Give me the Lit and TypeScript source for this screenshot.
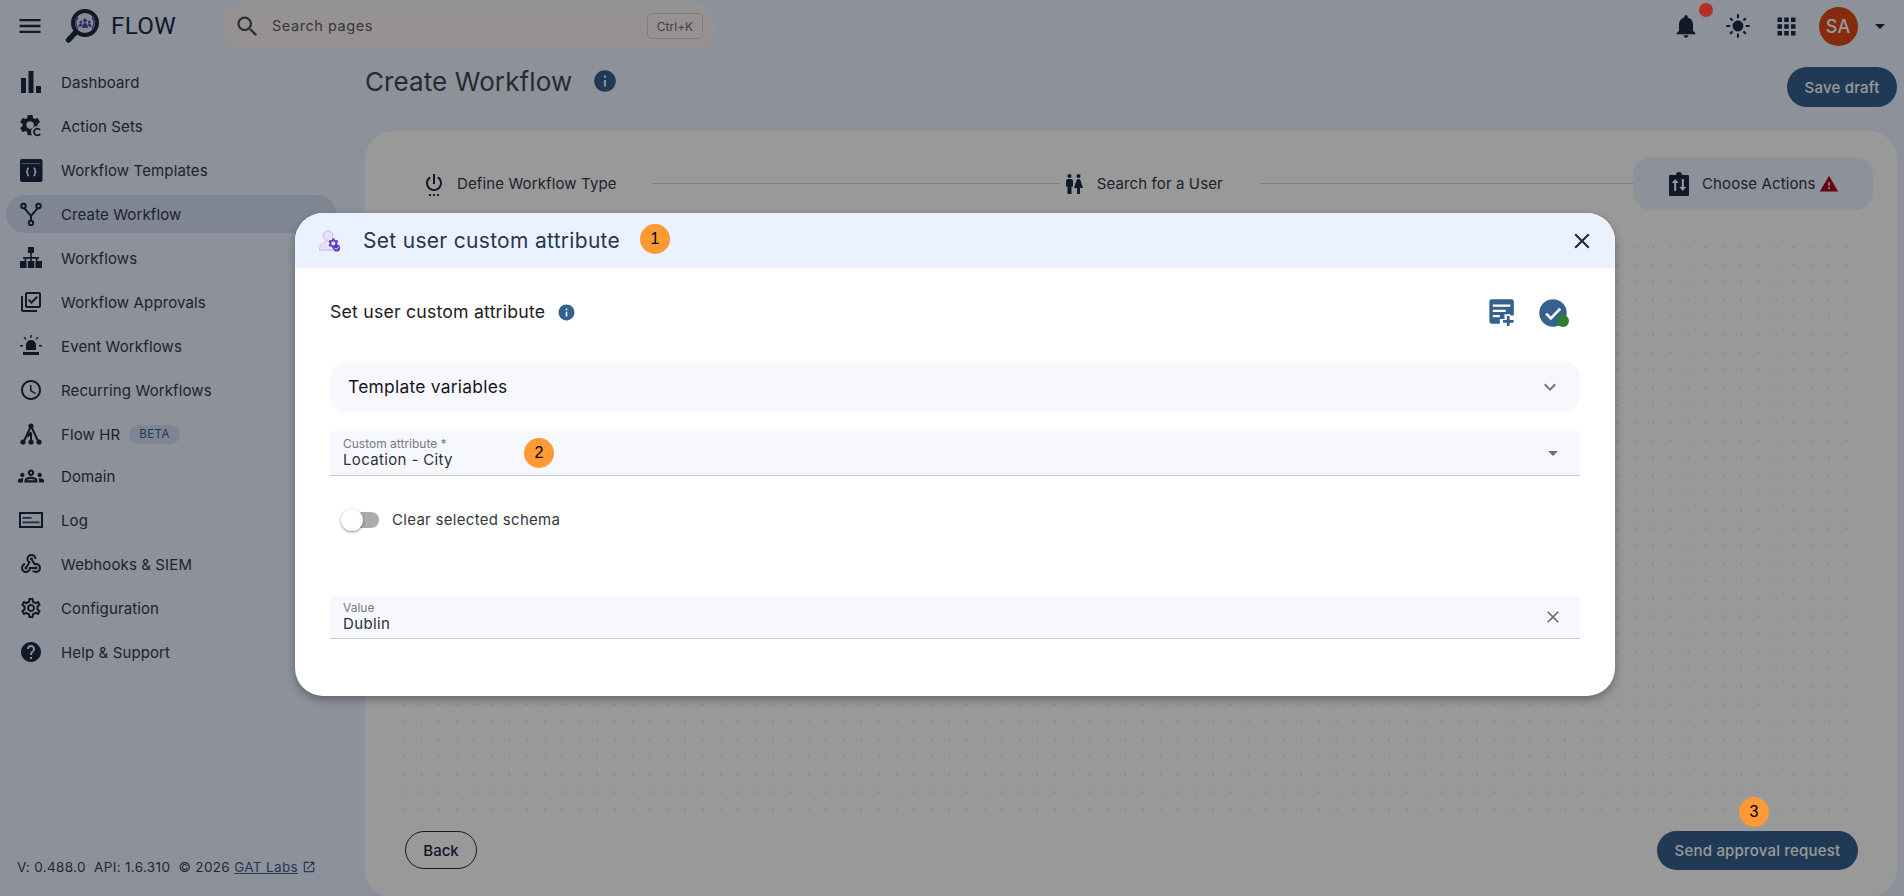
import { LitElement, html, css, svg } from "lit";
import { customElement } from "lit/decorators.js";

const P = {
  menu: "M3 18h18v-2H3v2zm0-5h18v-2H3v2zm0-7v2h18V6H3z",
  search: "M15.5 14h-.79l-.28-.27C15.41 12.59 16 11.11 16 9.5 16 5.91 13.09 3 9.5 3S3 5.91 3 9.5 5.91 16 9.5 16c1.61 0 3.09-.59 4.23-1.57l.27.28v.79l5 4.99L20.49 19l-4.99-5zm-6 0C7.01 14 5 11.99 5 9.5S7.01 5 9.5 5 14 7.01 14 9.5 11.99 14 9.5 14z",
  bell: "M12 22c1.1 0 2-.9 2-2h-4c0 1.1.89 2 2 2zm6-6v-5c0-3.07-1.64-5.64-4.5-6.32V4c0-.83-.67-1.5-1.5-1.5s-1.5.67-1.5 1.5v.68C7.63 5.36 6 7.92 6 11v5l-2 2v1h16v-1l-2-2z",
  sun: "M12 7c-2.76 0-5 2.24-5 5s2.24 5 5 5 5-2.24 5-5-2.24-5-5-5zM2 13h2c.55 0 1-.45 1-1s-.45-1-1-1H2c-.55 0-1 .45-1 1s.45 1 1 1zm18 0h2c.55 0 1-.45 1-1s-.45-1-1-1h-2c-.55 0-1 .45-1 1s.45 1 1 1zM11 2v2c0 .55.45 1 1 1s1-.45 1-1V2c0-.55-.45-1-1-1s-1 .45-1 1zm0 18v2c0 .55.45 1 1 1s1-.45 1-1v-2c0-.55-.45-1-1-1s-1 .45-1 1zM5.99 4.58c-.39-.39-1.03-.39-1.41 0-.39.39-.39 1.03 0 1.41l1.06 1.06c.39.39 1.03.39 1.41 0s.39-1.03 0-1.41L5.99 4.58zm12.37 12.37c-.39-.39-1.03-.39-1.41 0-.39.39-.39 1.03 0 1.41l1.06 1.06c.39.39 1.03.39 1.41 0 .39-.39.39-1.03 0-1.41l-1.06-1.06zm1.06-10.96c.39-.39.39-1.03 0-1.41-.39-.39-1.03-.39-1.41 0l-1.06 1.06c-.39.39-.39 1.03 0 1.41s1.03.39 1.41 0l1.06-1.06zM7.05 18.36c.39-.39.39-1.03 0-1.41-.39-.39-1.03-.39-1.41 0l-1.06 1.06c-.39.39-.39 1.03 0 1.41s1.03.39 1.41 0l1.06-1.06z",
  apps: "M4 8h4V4H4v4zm6 12h4v-4h-4v4zm-6 0h4v-4H4v4zm0-6h4v-4H4v4zm6 0h4v-4h-4v4zm6-10v4h4V4h-4zm-6 4h4V4h-4v4zm6 6h4v-4h-4v4zm0 6h4v-4h-4v4z",
  drop: "M7 10l5 5 5-5z",
  info: "M12 2C6.48 2 2 6.48 2 12s4.48 10 10 10 10-4.48 10-10S17.52 2 12 2zm1 15h-2v-6h2v6zm0-8h-2V7h2v2z",
  close: "M19 6.41L17.59 5 12 10.59 6.41 5 5 6.41 10.59 12 5 17.59 6.41 19 12 13.41 17.59 19 19 17.59 13.41 12z",
  expand: "M16.59 8.59L12 13.17 7.41 8.59 6 10l6 6 6-6z",
  warn: "M1 21h22L12 2 1 21zm12-3h-2v-2h2v2zm0-4h-2v-4h2v4z",
  open: "M19 19H5V5h7V3H5c-1.11 0-2 .9-2 2v14c0 1.1.89 2 2 2h14c1.1 0 2-.9 2-2v-7h-2v7zM14 3v2h3.59l-9.83 9.83 1.41 1.41L19 6.41V10h2V3h-7z",
  power: "M7 24h2v-2H7v2zm4 0h2v-2h-2v2zm2-22h-2v10h2V2zm3.56 2.44l-1.45 1.45C16.84 6.94 18 8.83 18 11c0 3.31-2.69 6-6 6s-6-2.69-6-6c0-2.17 1.16-4.06 2.88-5.12L7.44 4.44C5.36 5.88 4 8.28 4 11c0 4.42 3.58 8 8 8s8-3.58 8-8c0-2.72-1.36-5.12-3.44-6.56zM15 24h2v-2h-2v2z",
  wc: "M5.5 22v-7.5H4V9c0-1.1.9-2 2-2h3c1.1 0 2 .9 2 2v5.5H9.5V22h-4zM18 22v-6h3l-2.54-7.63C18.18 7.55 17.42 7 16.56 7h-.12c-.86 0-1.63.55-1.9 1.37L12 16h3v6h3zM7.5 6c1.11 0 2-.89 2-2s-.89-2-2-2-2 .89-2 2 .89 2 2 2zm9 0c1.11 0 2-.89 2-2s-.89-2-2-2-2 .89-2 2 .89 2 2 2z",
  approvals: "M20 4v12H8V4h12m0-2H8c-1.1 0-2 .9-2 2v12c0 1.1.9 2 2 2h12c1.1 0 2-.9 2-2V4c0-1.1-.9-2-2-2zm-7.53 12L9 10.5l1.4-1.41 2.07 2.08L17.6 6 19 7.41 12.47 14zM4 6H2v14c0 1.1.9 2 2 2h14v-2H4V6z",
  clock: "M11.99 2C6.47 2 2 6.48 2 12s4.47 10 9.99 10C17.52 22 22 17.52 22 12S17.52 2 11.99 2zM12 20c-4.42 0-8-3.58-8-8s3.58-8 8-8 8 3.58 8 8-3.58 8-8 8zm.5-13H11v6l5.25 3.15.75-1.23-4.5-2.67z",
  groups: "M4 13c1.1 0 2-.9 2-2 0-1.1-.9-2-2-2s-2 .9-2 2c0 1.1.9 2 2 2zm1.13 1.1C4.76 14.04 4.39 14 4 14c-.99 0-1.93.21-2.78.58C.48 14.9 0 15.62 0 16.43V18h4.5v-1.61c0-.83.23-1.61.63-2.29zM20 13c1.1 0 2-.9 2-2 0-1.1-.9-2-2-2s-2 .9-2 2c0 1.1.9 2 2 2zm4 3.43c0-.81-.48-1.53-1.22-1.85C21.93 14.21 20.99 14 20 14c-.39 0-.76.04-1.13.1.4.68.63 1.46.63 2.29V18H24v-1.57zm-7.76-2.78C15.07 13.14 13.62 12.75 12 12.75c-1.62 0-3.07.4-4.24.9C6.68 14.13 6 15.21 6 16.39V18h12v-1.61c0-1.18-.68-2.26-1.76-2.74zM8.07 16c.09-.23.13-.39.91-.69.97-.38 1.99-.56 3.02-.56s2.05.18 3.02.56c.77.3.81.46.91.69H8.07zM12 8c.55 0 1 .45 1 1s-.45 1-1 1-1-.45-1-1 .45-1 1-1m0-2c-1.66 0-3 1.34-3 3s1.34 3 3 3 3-1.34 3-3-1.34-3-3-3z",
  webhook: "M10 15h5.88c.27-.31.67-.5 1.12-.5.83 0 1.5.67 1.5 1.5s-.67 1.5-1.5 1.5c-.44 0-.84-.19-1.12-.5H11.9c-.46 2.28-2.48 4-4.9 4-2.76 0-5-2.24-5-5 0-2.42 1.72-4.44 4-4.9v2.07c-1.16.41-2 1.53-2 2.83 0 1.65 1.35 3 3 3s3-1.35 3-3v-1zm2.5-11c1.65 0 3 1.35 3 3h2c0-2.76-2.24-5-5-5s-5 2.24-5 5c0 1.43.6 2.71 1.55 3.62l-2.35 3.9c-.68.14-1.2.75-1.2 1.48 0 .83.67 1.5 1.5 1.5s1.5-.67 1.5-1.5c0-.16-.02-.31-.07-.45l3.38-5.63C10.49 9.61 9.5 8.42 9.5 7c0-1.65 1.35-3 3-3zm4.5 9c-.64 0-1.23.2-1.72.54l-3.05-5.07C11.53 8.35 11 7.74 11 7c0-.83.67-1.5 1.5-1.5S14 6.17 14 7c0 .15-.02.29-.06.43l2.19 3.65c.28-.05.57-.08.87-.08 2.76 0 5 2.24 5 5s-2.24 5-5 5c-1.85 0-3.47-1.01-4.33-2.5h2.67c.48.32 1.05.5 1.66.5 1.65 0 3-1.35 3-3s-1.35-3-3-3z",
  gearOut: "M19.43 12.98c.04-.32.07-.64.07-.98 0-.34-.03-.66-.07-.98l2.11-1.65c.19-.15.24-.42.12-.64l-2-3.46c-.09-.16-.26-.25-.44-.25-.06 0-.12.01-.17.03l-2.49 1c-.52-.4-1.08-.73-1.69-.98l-.38-2.65C14.46 2.18 14.25 2 14 2h-4c-.25 0-.46.18-.49.42l-.38 2.65c-.61.25-1.17.59-1.69.98l-2.49-1c-.06-.02-.12-.03-.18-.03-.17 0-.34.09-.43.25l-2 3.46c-.13.22-.07.49.12.64l2.11 1.65c-.04.32-.07.65-.07.98 0 .33.03.66.07.98l-2.11 1.65c-.19.15-.24.42-.12.64l2 3.46c.09.16.26.25.44.25.06 0 .12-.01.17-.03l2.49-1c.52.4 1.08.73 1.69.98l.38 2.65c.03.24.24.42.49.42h4c.25 0 .46-.18.49-.42l.38-2.65c.61-.25 1.17-.59 1.69-.98l2.49 1c.06.02.12.03.18.03.17 0 .34-.09.43-.25l2-3.46c.12-.22.07-.49-.12-.64l-2.11-1.65zm-1.98-1.71c.04.31.05.52.05.73 0 .21-.02.43-.05.73l-.14 1.13.89.7 1.08.84-.7 1.21-1.27-.51-1.04-.42-.9.68c-.43.32-.84.56-1.25.73l-1.06.43-.16 1.13-.2 1.35h-1.4l-.19-1.35-.16-1.13-1.06-.43c-.43-.18-.83-.41-1.23-.71l-.91-.7-1.06.43-1.27.51-.7-1.21 1.08-.84.89-.7-.14-1.13c-.03-.31-.05-.54-.05-.74s.02-.43.05-.73l.14-1.13-.89-.7-1.08-.84.7-1.21 1.27.51 1.04.42.9-.68c.43-.32.84-.56 1.25-.73l1.06-.43.16-1.13.2-1.35h1.39l.19 1.35.16 1.13 1.06.43c.43.18.83.41 1.23.71l.91.7 1.06-.43 1.27-.51.7 1.21-1.07.85-.89.7.14 1.13zM12 8c-2.21 0-4 1.79-4 4s1.79 4 4 4 4-1.79 4-4-1.79-4-4-4zm0 6c-1.1 0-2-.9-2-2s.9-2 2-2 2 .9 2 2-.9 2-2 2z",
  help: "M12 2C6.48 2 2 6.48 2 12s4.48 10 10 10 10-4.48 10-10S17.52 2 12 2zm1 17h-2v-2h2v2zm2.07-7.75l-.9.92C13.45 12.9 13 13.5 13 15h-2v-.5c0-1.1.45-2.1 1.17-2.83l1.24-1.26c.37-.36.59-.86.59-1.41 0-1.1-.9-2-2-2s-2 .9-2 2H8c0-2.21 1.79-4 4-4s4 1.79 4 4c0 .88-.36 1.68-.93 2.25z",
  gearFill: "M19.14 12.94c.04-.3.06-.61.06-.94 0-.32-.02-.64-.07-.94l2.03-1.58c.18-.14.23-.41.12-.61l-1.92-3.32c-.12-.22-.37-.29-.59-.22l-2.39.96c-.5-.38-1.03-.7-1.62-.94l-.36-2.54c-.04-.24-.24-.41-.48-.41h-3.84c-.24 0-.43.17-.47.41l-.36 2.54c-.59.24-1.13.57-1.62.94l-2.39-.96c-.22-.08-.47 0-.59.22L2.74 8.87c-.12.21-.08.47.12.61l2.03 1.58c-.05.3-.09.63-.09.94s.02.64.07.94l-2.03 1.58c-.18.14-.23.41-.12.61l1.92 3.32c.12.22.37.29.59.22l2.39-.96c.5.38 1.03.7 1.62.94l.36 2.54c.05.24.24.41.48.41h3.84c.24 0 .44-.17.47-.41l.36-2.54c.59-.24 1.13-.56 1.62-.94l2.39.96c.22.08.47 0 .59-.22l1.92-3.32c.12-.22.07-.47-.12-.61l-2.01-1.58zM12 15.6c-1.98 0-3.6-1.62-3.6-3.6s1.62-3.6 3.6-3.6 3.6 1.62 3.6 3.6-1.62 3.6-3.6 3.6z",
};

const mat = (d: string, cls = "") => html`<svg class="ic ${cls}" viewBox="0 0 24 24"><path d=${d}></path></svg>`;
const raw = (body: unknown, cls = "") => html`<svg class="ic ${cls}" viewBox="0 0 24 24">${body}</svg>`;

const navIcons: Record<string, unknown> = {
  bars: raw(svg`<path d="M2 8h5v15H2zM9.500 1h5v22h-5zM17 16h5v7h-5z"></path>`, "lg"),
  actions: raw(svg`<path d=${P.gearFill} transform="translate(-1.500 -1.500) scale(1.05)"></path><circle cx="18" cy="18" r="6" fill="#ebf2ff"></circle><path d="M21 15.800a3.400 3.400 0 1 0 .2 4.200" fill="none" stroke="currentColor" stroke-width="1.800"></path>`, "lg"),
  templates: raw(svg`<rect x="1" y="1" width="22.500" height="23" rx="2"></rect><path d="M3 5.200h18.500v.9H3z" fill="#ebf2ff" opacity=".55"></path><path d="M10 10c-1.500 0-1.500 1-1.500 2s-.5 1.800-1.500 1.800c1 0 1.500.8 1.500 1.800s0 2 1.500 2M14.500 10c1.500 0 1.500 1 1.500 2s.5 1.800 1.500 1.800c-1 0-1.500.8-1.500 1.800s0 2-1.500 2" fill="none" stroke="#ebf2ff" stroke-width="1.600"></path>`, "lg"),
  fork: raw(svg`<g fill="none" stroke="currentColor" stroke-width="2"><circle cx="4.500" cy="4" r="2.200"></circle><circle cx="19.500" cy="4" r="2.200"></circle><circle cx="12" cy="21" r="2.200"></circle><path d="M5.300 6.200 12 14l6.700-7.800M12 14v4.800"></path></g>`, "lg"),
  org: raw(svg`<path d="M9 1h6v6H9zM11.200 7h1.600v4h-1.600zM4 11h16v1.800h-1.600V15h-1.600v-2.200H7.200V15H5.600v-2.200H4zM11.200 11h1.600v4h-1.600zM1 15h6.500v7H1zM8.800 15h6.500v7H8.800zM16.500 15H23v7h-6.500z"></path>`, "lg"),
  approvals: mat(P.approvals, "lg"),
  siren: raw(svg`<path d="M7 16v-5a5 5 0 0 1 10 0v5zM4 18h16v3H4zM11.300 1h1.400v3h-1.400zM1 11h3v1.400H1zM20 11h3v1.400h-3zM4.500 3.700l1-1 2 2-1 1zM19.500 3.700l-1-1-2 2 1 1z"></path>`, "lg"),
  clock: mat(P.clock, "lg"),
  tree: raw(svg`<g fill="none" stroke="currentColor" stroke-width="2"><path d="M12 4 5 19M12 4l7 15M12 11v8M12 10l-3.500 5"></path></g><circle cx="12" cy="4" r="2.600"></circle><circle cx="4" cy="20" r="2.600"></circle><circle cx="12" cy="20" r="2.600"></circle><circle cx="20" cy="20" r="2.600"></circle>`, "lg"),
  groups: mat(P.groups, "xl"),
  log: raw(svg`<path fill-rule="evenodd" d="M0 4h24v16H0zM2 6v12h20V6z"></path><path d="M3.500 9h9v1.800h-9zM3.500 13.500h17v1.800h-17z" opacity=".85"></path>`, "lg"),
  webhook: mat(P.webhook, "lg"),
  gear: mat(P.gearOut, "lg"),
  help: mat(P.help, "lg"),
};

const nav = [
  ["bars", "Dashboard"], ["actions", "Action Sets"], ["templates", "Workflow Templates"], ["fork", "Create Workflow", "active"],
  ["org", "Workflows"], ["approvals", "Workflow Approvals"], ["siren", "Event Workflows"], ["clock", "Recurring Workflows"],
  ["tree", "Flow HR", "beta"], ["groups", "Domain"], ["log", "Log"], ["webhook", "Webhooks & SIEM"], ["gear", "Configuration"], ["help", "Help & Support"],
];

@customElement("app-root")
export class AppRoot extends LitElement {
  static styles = css`
    :host { display: block; position: relative; width: 100%; height: 100vh; overflow: hidden; background: #ebf2ff;
      font-family: Inter, "Liberation Sans", sans-serif; color: #323a4b; font-size: 14px; }
    * { box-sizing: border-box; }
    .ic { display: block; width: 24px; height: 24px; fill: currentColor; flex: none; color: #1a2b45; }
    .ic.xl { width: 26px; height: 26px; margin: 0 -1px; }
    .app { display: flex; flex-direction: column; height: 100%; }
    .top { display: flex; align-items: center; height: 52px; flex: none; }
    .burger { width: 28px; height: 28px; margin-left: 16px; }
    .logo { width: 36px; height: 36px; margin-left: 21px; flex: none; }
    .brand { font-size: 24.2px; margin-left: 10px; letter-spacing: .3px; color: #1a2b45; width: 66px; font-family: Roboto, sans-serif; }
    .search { display: flex; align-items: center; width: 494px; height: 46px; border-radius: 23px; background: #faf3f7; margin-left: 45px; padding: 0 13px 0 12px; }
    .search .ic { width: 27px; height: 27px; color: #4a4f57; }
    .search span.ph { margin: 0 0 1px 11px; font-size: 14.5px; color: #5c5f66; letter-spacing: .55px; flex: 1; }
    .kbd { width: 56px; height: 26px; border: 1px solid #d4cfd3; border-radius: 5px; display: flex; align-items: center; justify-content: center; font-size: 12px; color: #6b6e75; }
    .tools { margin-left: auto; display: flex; align-items: center; padding-right: 16px; }
    .bell { width: 28px; height: 28px; margin-right: 25px; }
    .sun { width: 26px; height: 26px; margin-right: 22.500px; }
    .grid { width: 27px; height: 27px; margin-right: 18.500px; }
    .avatar { width: 39px; height: 39px; border-radius: 50%; background: #de4a17; color: #fff; display: flex; align-items: center; justify-content: center; font-size: 18px; font-weight: 500; }
    .caret { width: 24px; height: 24px; margin-left: 10px; margin-right: -3.500px; }

    .body { flex: 1; display: flex; min-height: 0; }
    .side { width: 365px; flex: none; display: flex; flex-direction: column; padding: 11px 29px 21px 6px; }
    .row { display: flex; align-items: center; height: 38px; margin-bottom: 6px; border-radius: 19px; padding-left: 13px; gap: 18px; letter-spacing: .12px; color: #323a4b; flex: none; font-size: 15px; }
    .row.active { background: #d4def6; }
    .row.tight { margin-bottom: 4px; }
    .beta { font-size: 11.500px; height: 19px; padding: 0 10px; border-radius: 10px; background: #d4def6; color: #36618e; display: inline-flex; align-items: center; margin-left: -9px; letter-spacing: .4px; }
    .foot { margin-top: auto; padding-left: 11px; display: flex; align-items: center; font-size: 13.500px; letter-spacing: .34px; white-space: pre; color: #3c4352; }
    .foot a { color: #36618e; text-decoration: underline; }
    .foot .ic { width: 14px; height: 14px; margin-left: 4px; color: #36618e; }

    .main { flex: 1; min-width: 0; display: flex; flex-direction: column; padding-right: 7px; }
    .head { height: 79px; flex: none; display: flex; }
    .title { font-size: 26px; color: #43474e; margin-top: 14px; letter-spacing: .1px; }
    .head .ic { width: 26px; height: 26px; margin: 16px 0 0 20px; color: #36618e; }
    .save { margin-left: auto; margin-top: 15px; height: 40px; width: 110px; padding-bottom: 2px; }
    .btn { border: 0; border-radius: 20px; background: #36618e; color: #fff; font: 500 15px Inter, sans-serif; letter-spacing: .2px; display: flex; align-items: center; justify-content: center; padding-bottom: 1px; }
    .card { flex: 1; background: #fff; border-radius: 28px; margin-bottom: -1px; display: flex; flex-direction: column; padding: 26px 0 27px; min-height: 0; }
    .stepper { display: flex; align-items: center; height: 53px; flex: none; padding: 0 24px; }
    .step { display: flex; align-items: center; height: 53px; padding: 0 36px 0 33px; gap: 11px; font-size: 15px; letter-spacing: .12px; color: #323a4b; white-space: nowrap; }
    .step.b { padding: 0 38px 0 2px; }
    .step.cur { background: #ebf2ff; border-radius: 18px; width: 240px; padding-left: 34px; }
    .step .warn { width: 20px; height: 20px; color: #b00020; margin-left: -8px; }
    .line { height: 1px; background: #d3d3d3; }
    .l1 { flex: 408; }
    .l2 { flex: 373; }
    .canvas { flex: 1; margin: 36px 49px 19px 38px; background-image: radial-gradient(circle, #a9a9a9 .55px, transparent .75px); background-size: 17.6px 17.6px; background-position: -8px -8px; }
    .actions { display: flex; justify-content: space-between; padding: 0 39px 0 40px; height: 39px; flex: none; }
    .back { width: 72px; height: 38px; border: 1.500px solid #1a2b45; border-radius: 19px; background: transparent; font: 500 15px Inter, sans-serif; color: #1a2b45; padding-bottom: 1px; }
    .send { width: 201px; height: 39px; }

    .scrim { position: absolute; inset: 0; background: rgba(0,0,0,.4); padding: 213px 0 0 295px; }
    .dlg { width: 1320px; height: 483px; background: #fff; border-radius: 28px; overflow: hidden; box-shadow: 0 4px 8px rgba(0,0,0,.3); display: flex; flex-direction: column; }
    .dlg-head { height: 55px; flex: none; background: #ebf2ff; display: flex; align-items: center; padding: 0 20px 0 23px; }
    .dlg-head .person { width: 23px; height: 23px; }
    .dlg-title { font-size: 21px; color: #29364a; margin-left: 22px; letter-spacing: .3px; flex: 1; }
    .dlg-head .x { width: 26px; height: 26px; color: #1a2b45; }
    .dlg-body { padding: 30px 35px 0; display: flex; flex-direction: column; flex: 1; }
    .sub { display: flex; align-items: center; height: 28px; margin-bottom: 35px; }
    .sub-t { font-size: 17.700px; color: #1c1c1e; letter-spacing: .2px; margin-bottom: 1px; }
    .sub .i { width: 19px; height: 19px; color: #36618e; margin-left: 12px; }
    .sub .add { width: 28px; height: 28px; margin-left: auto; color: #36618e; transform: translateX(1px); }
    .chk { position: relative; width: 30px; height: 28px; margin: 0 12px 0 24px; }
    .chk .ic { width: 30px; height: 30px; color: #36618e; }
    .dot { position: absolute; width: 12px; height: 12px; border-radius: 50%; background: #2e7d32; right: -1px; bottom: -1px; }
    .acc { height: 52px; border-radius: 17px; background: #f7f8fe; display: flex; align-items: center; padding: 0 18px 1px 18px; margin-bottom: 18px; font-size: 17.400px; letter-spacing: .26px; color: #15171b; justify-content: space-between; }
    .acc .ic { color: #70747b; width: 24px; height: 24px; }
    .field { background: #f7f8fe; border-bottom: 1px solid #c9cacd; border-radius: 4px 4px 0 0; padding: 0 15px 0 13px; display: flex; align-items: center; justify-content: space-between; flex: none; }
    .field .lab { font-size: 12px; color: #767a80; line-height: 15px; letter-spacing: 0; }
    .field .val { font-size: 15px; color: #2d3036; line-height: 20px; letter-spacing: .35px; margin-top: -1px; }
    .f1 { height: 45px; }
    .f1 .ic { color: #6f6f72; width: 24px; height: 24px; }
    .f2 { height: 44px; margin-top: 64px; padding-right: 17px; }
    .f2 .ic { color: #6f6f72; width: 20px; height: 20px; }
    .tog { display: flex; align-items: center; height: 22px; margin-top: 33px; padding-left: 11px; }
    .track { width: 32px; height: 16px; border-radius: 8px; background: #ababab; margin-left: 6px; position: relative; flex: none; }
    .thumb { position: absolute; width: 22px; height: 22px; border-radius: 50%; background: #fff; left: -6px; top: -3px; box-shadow: 0 1px 3px rgba(0,0,0,.45); }
    .tog-l { margin: 0 0 1px 13px; font-size: 15px; letter-spacing: .3px; color: #35383d; }

    .mark { position: absolute; width: 30px; height: 30px; border-radius: 50%; background: #ff9933; color: #000; display: flex; align-items: center; justify-content: center; font: 16px "Liberation Sans", sans-serif; }
    .m1 { left: 640px; top: 224px; }
    .m2 { left: 524px; top: 438px; }
    .m3 { left: 1739px; top: 797px; }
    .badge { position: absolute; width: 14px; height: 14px; border-radius: 50%; background: #b3302a; left: 1699px; top: 3px; }
  `;

  render() {
    return html`
      <div class="app">
        <header class="top">
          ${mat(P.menu, "burger")}
          <svg class="logo" viewBox="0 0 36 36">
            <path d="M10 25 3.500 32" stroke="#1a2b45" stroke-width="5.500" stroke-linecap="round"></path>
            <circle cx="20" cy="15" r="12" fill="#e6e6f8" stroke="#1a2b45" stroke-width="4"></circle>
            <g fill="#5b4aa8">
              <circle cx="20" cy="12.500" r="1.900"></circle><circle cx="15.800" cy="14" r="1.500"></circle><circle cx="24.200" cy="14" r="1.500"></circle>
              <path d="M17 20c0-3 1.300-5.200 3-5.200s3 2.200 3 5.200zM13.400 18.800c0-2 1-3.400 2.400-3.400.6 0 1 .2 1.300.5-.5.900-.8 1.900-.8 2.900zM26.600 18.800c0-2-1-3.400-2.400-3.400-.6 0-1 .2-1.300.5.5.900.8 1.900.8 2.900z"></path>
            </g>
            <path d="M13 9.500a9 9 0 0 0 0 11M27 9.500a9 9 0 0 1 0 11" fill="none" stroke="#5b4aa8" stroke-width="1.500"></path>
          </svg>
          <div class="brand">FLOW</div>
          <div class="search">
            ${mat(P.search)}
            <span class="ph">Search pages</span>
            <span class="kbd">Ctrl+K</span>
          </div>
          <div class="tools">
            ${mat(P.bell, "bell")}
            ${mat(P.sun, "sun")}
            ${mat(P.apps, "grid")}
            <div class="avatar">SA</div>
            ${mat(P.drop, "caret")}
          </div>
        </header>
        <div class="body">
          <aside class="side">
            ${nav.map(([ic, label, flag]) => html`
              <div class="row ${flag === "active" ? "active" : ""} ${flag === "beta" ? "tight" : ""}">
                ${navIcons[ic]}<span>${label}</span>${flag === "beta" ? html`<span class="beta">BETA</span>` : ""}
              </div>`)}
            <div class="foot">V: 0.488.0  API: 1.6.310  © 2026 <a>GAT Labs</a>${mat(P.open)}</div>
          </aside>
          <main class="main">
            <div class="head">
              <div class="title">Create Workflow</div>
              ${mat(P.info)}
              <button class="btn save">Save draft</button>
            </div>
            <section class="card">
              <div class="stepper">
                <div class="step">${mat(P.power)}<span>Define Workflow Type</span></div>
                <div class="line l1"></div>
                <div class="step b">${mat(P.wc)}<span>Search for a User</span></div>
                <div class="line l2"></div>
                <div class="step cur">
                  ${raw(svg`<path fill-rule="evenodd" d="M3 3h6a3 3 0 0 1 6 0h6a1 1 0 0 1 1 1v19a1 1 0 0 1-1 1H3a1 1 0 0 1-1-1V4a1 1 0 0 1 1-1z"></path><path d="M8.200 7 4.800 11h2.400v8h2v-8h2.400zM15.800 19l3.400-4h-2.400V7h-2v8h-2.400z" fill="#fff"></path>`)}
                  <span>Choose Actions</span>
                  ${mat(P.warn, "warn")}
                </div>
              </div>
              <div class="canvas"></div>
              <div class="actions">
                <button class="back">Back</button>
                <button class="btn send">Send approval request</button>
              </div>
            </section>
          </main>
        </div>
      </div>

      <div class="scrim">
        <div class="dlg">
          <div class="dlg-head">
            <svg class="person" viewBox="0 0 24 24">
              <circle cx="10.500" cy="7" r="5" fill="#e6e2fa" stroke="#c3b8ef" stroke-width="1"></circle>
              <path d="M1.500 22c0-5.500 4-9 9-9 2 0 4 .6 5.500 1.800V22z" fill="#e6e2fa" stroke="#c3b8ef" stroke-width="1"></path>
              <circle cx="16" cy="15" r="6.500" fill="#ebf2ff"></circle>
              <path d=${P.gearFill} fill="#6b46c1" transform="translate(9.400 8.400) scale(.55)"></path>
              <circle cx="19.500" cy="20" r="3.500" fill="#5b3bc0"></circle>
              <path d="M17.800 20l1.300 1.300 2.200-2.300" fill="none" stroke="#fff" stroke-width="1"></path>
            </svg>
            <div class="dlg-title">Set user custom attribute</div>
            ${mat(P.close, "x")}
          </div>
          <div class="dlg-body">
            <div class="sub">
              <span class="sub-t">Set user custom attribute</span>
              ${mat(P.info, "i")}
              ${raw(svg`<path d="M2 3a2 2 0 0 1 2-2h17a2 2 0 0 1 2 2v12h-3v-1h-5v4h-4v4H4a2 2 0 0 1-2-2z"></path><path d="M5 5.500h15v2H5zM5 10h11v2H5zM5 14.500h6v2H5z" fill="#fff"></path><path d="M17 15.500h2.400v3.400h3.400v2.400h-3.400v3.400H17v-3.400h-3.400v-2.400H17z"></path>`, "add")}
              <div class="chk">
                ${raw(svg`<path d="M12 1a11 11 0 1 0 0 22 11 11 0 0 0 0-22z"></path><path d="M6.500 12.500l3.800 3.800 7.500-7.800" fill="none" stroke="#fff" stroke-width="2.200"></path>`)}
                <span class="dot"></span>
              </div>
            </div>
            <div class="acc"><span>Template variables</span>${mat(P.expand)}</div>
            <div class="field f1">
              <div><div class="lab">Custom attribute *</div><div class="val">Location - City</div></div>
              ${mat(P.drop)}
            </div>
            <div class="tog">
              <div class="track"><div class="thumb"></div></div>
              <span class="tog-l">Clear selected schema</span>
            </div>
            <div class="field f2">
              <div><div class="lab">Value</div><div class="val">Dublin</div></div>
              ${mat(P.close)}
            </div>
          </div>
        </div>
      </div>
      <div class="badge"></div>
      <div class="mark m1">1</div>
      <div class="mark m2">2</div>
      <div class="mark m3">3</div>
    `;
  }
}
